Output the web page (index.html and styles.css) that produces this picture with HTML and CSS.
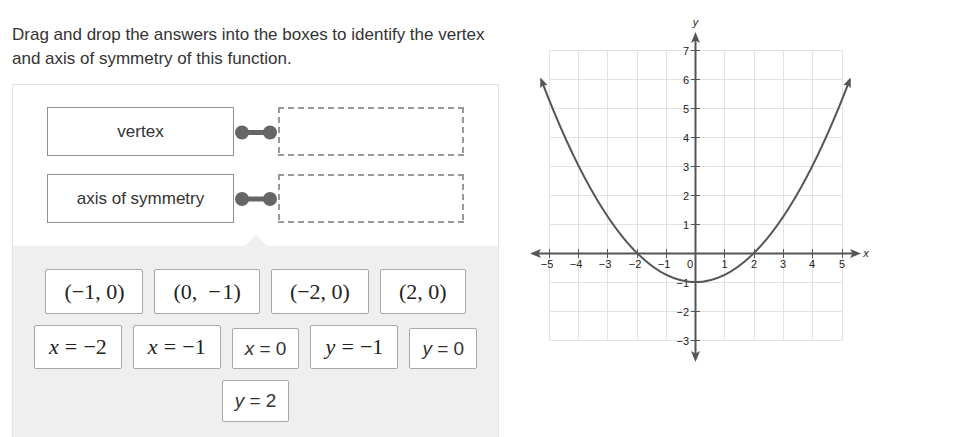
FILE: index.html
```html
<!DOCTYPE html>
<html>
<head>
<meta charset="utf-8">
<link rel="stylesheet" href="styles.css">
</head>
<body>
<div class="page">
  <div class="left">
    <p class="intro">Drag and drop the answers into the boxes to identify the vertex and axis of symmetry of this function.</p>
    <div class="panel">
      <div class="match">
        <div class="row">
          <div class="label">vertex</div>
          <svg class="connector" width="44" height="49" viewBox="0 0 44 49"><line x1="8" y1="25.5" x2="36" y2="25.5"/><circle cx="8" cy="25.5" r="7"/><circle cx="36" cy="25.5" r="7"/></svg>
          <div class="drop"></div>
        </div>
        <div class="row">
          <div class="label">axis of symmetry</div>
          <svg class="connector" width="44" height="49" viewBox="0 0 44 49"><line x1="8" y1="25" x2="36" y2="25"/><circle cx="8" cy="25" r="7"/><circle cx="36" cy="25" r="7"/></svg>
          <div class="drop"></div>
        </div>
      </div>
      <div class="bank">
        <div class="tile mj m1">(−1, 0)</div>
        <div class="tile mj m1">(0,&nbsp; −&#8202;1)</div>
        <div class="tile mj m1">(−2, 0)</div>
        <div class="tile mj m1">(2, 0)</div>
        <div class="tile mj m2"><i>x</i><span class="op">=</span>−2</div>
        <div class="tile mj m2"><i>x</i><span class="op">=</span>−1</div>
        <div class="tile s"><i>x</i> = 0</div>
        <div class="tile mj m2"><i>y</i><span class="op">=</span>−1</div>
        <div class="tile s"><i>y</i> = 0</div>
        <div class="tile s s3"><i>y</i> = 2</div>
      </div>
    </div>
  </div>
  <svg class="graph" width="360" height="437" viewBox="520 0 360 437">
    <defs>
      <marker id="ah" markerUnits="userSpaceOnUse" markerWidth="10" markerHeight="10" viewBox="0 0 10 10" refX="8" refY="5" orient="auto-start-reverse">
        <path d="M0,1 L10,5 L0,9 L2,5 z" fill="#555"/>
      </marker>
    </defs>
    <g class="grid">
      <line x1="549.5" y1="50" x2="549.5" y2="341"/>
      <line x1="578.5" y1="50" x2="578.5" y2="341"/>
      <line x1="607.5" y1="50" x2="607.5" y2="341"/>
      <line x1="637.5" y1="50" x2="637.5" y2="341"/>
      <line x1="666.5" y1="50" x2="666.5" y2="341"/>
      <line x1="724.5" y1="50" x2="724.5" y2="341"/>
      <line x1="754.5" y1="50" x2="754.5" y2="341"/>
      <line x1="783.5" y1="50" x2="783.5" y2="341"/>
      <line x1="812.5" y1="50" x2="812.5" y2="341"/>
      <line x1="842.5" y1="50" x2="842.5" y2="341"/>
      <line x1="549" y1="50.5" x2="843" y2="50.5"/>
      <line x1="549" y1="79.5" x2="843" y2="79.5"/>
      <line x1="549" y1="108.5" x2="843" y2="108.5"/>
      <line x1="549" y1="137.5" x2="843" y2="137.5"/>
      <line x1="549" y1="166.5" x2="843" y2="166.5"/>
      <line x1="549" y1="195.5" x2="843" y2="195.5"/>
      <line x1="549" y1="224.5" x2="843" y2="224.5"/>
      <line x1="549" y1="282.5" x2="843" y2="282.5"/>
      <line x1="549" y1="311.5" x2="843" y2="311.5"/>
      <line x1="549" y1="340.5" x2="843" y2="340.5"/>
    </g>
    <g class="axis">
      <line x1="534" y1="253.5" x2="856" y2="253.5"/>
      <line x1="695.5" y1="37" x2="695.5" y2="357"/>
    </g>
    <g class="heads">
      <path d="M530,253.5 L541,249 L538.5,253.5 L541,258 z"/>
      <path d="M861,253.5 L850,249 L852.5,253.5 L850,258 z"/>
      <path d="M695.5,32 L691,43 L695.5,40.5 L700,43 z"/>
      <path d="M695.5,362 L691,351 L695.5,353.5 L700,351 z"/>
    </g>
    <g class="ticks">
      <line x1="549.5" y1="249" x2="549.5" y2="258"/>
      <line x1="578.5" y1="249" x2="578.5" y2="258"/>
      <line x1="607.5" y1="249" x2="607.5" y2="258"/>
      <line x1="637.5" y1="249" x2="637.5" y2="258"/>
      <line x1="666.5" y1="249" x2="666.5" y2="258"/>
      <line x1="724.5" y1="249" x2="724.5" y2="258"/>
      <line x1="754.5" y1="249" x2="754.5" y2="258"/>
      <line x1="783.5" y1="249" x2="783.5" y2="258"/>
      <line x1="812.5" y1="249" x2="812.5" y2="258"/>
      <line x1="842.5" y1="249" x2="842.5" y2="258"/>
      <line x1="691" y1="50.5" x2="700" y2="50.5"/>
      <line x1="691" y1="79.5" x2="700" y2="79.5"/>
      <line x1="691" y1="108.5" x2="700" y2="108.5"/>
      <line x1="691" y1="137.5" x2="700" y2="137.5"/>
      <line x1="691" y1="166.5" x2="700" y2="166.5"/>
      <line x1="691" y1="195.5" x2="700" y2="195.5"/>
      <line x1="691" y1="224.5" x2="700" y2="224.5"/>
      <line x1="691" y1="282.5" x2="700" y2="282.5"/>
      <line x1="691" y1="311.5" x2="700" y2="311.5"/>
      <line x1="691" y1="340.5" x2="700" y2="340.5"/>
    </g>
    <g class="lbl xl">
      <text x="547" y="268">−5</text>
      <text x="576" y="268">−4</text>
      <text x="605" y="268">−3</text>
      <text x="635" y="268">−2</text>
      <text x="664" y="268">−1</text>
      <text x="690" y="268">0</text>
      <text x="724.5" y="268">1</text>
      <text x="754" y="268">2</text>
      <text x="783" y="268">3</text>
      <text x="812" y="268">4</text>
      <text x="842" y="268">5</text>
    </g>
    <g class="lbl yl">
      <text x="689" y="54.5">7</text>
      <text x="689" y="83.5">6</text>
      <text x="689" y="112.5">5</text>
      <text x="689" y="141.5">4</text>
      <text x="689" y="170.5">3</text>
      <text x="689" y="199.5">2</text>
      <text x="689" y="228.5">1</text>
      <text x="689" y="286.5">−1</text>
      <text x="689" y="315.5">−2</text>
      <text x="689" y="344.5">−3</text>
    </g>
    <text class="lbl axn" x="695.5" y="26">y</text>
    <text class="lbl axn" x="866" y="257">x</text>
    <path class="curve" d="M541.1 79.3 Q695.5 484.9 849.9 79.3" marker-start="url(#ah)" marker-end="url(#ah)"/>
  </svg>
</div>
</body>
</html>
```

FILE: styles.css
```css
html, body {
  margin: 0;
  padding: 0;
  overflow: hidden;
  background: #fff;
}
.page {
  display: flex;
  align-items: flex-start;
  width: 957px;
  height: 437px;
  overflow: hidden;
}
.left {
  width: 487px;
  padding: 23px 0 0 12px;
  flex: none;
}
.intro {
  margin: 0 0 13px;
  font: 17px/24px "Liberation Sans", Arial, sans-serif;
  color: #333;
}
.panel {
  border: 1px solid #e4e4e4;
  border-bottom: none;
}
.match {
  background: #fff;
  padding: 22px 34px 23px;
  display: flex;
  flex-direction: column;
  gap: 18px;
}
.row {
  display: flex;
  align-items: center;
}
.label {
  box-sizing: border-box;
  width: 187px;
  height: 49px;
  border: 1px solid #8f8f8f;
  display: flex;
  align-items: center;
  justify-content: center;
  font: 17px "Liberation Sans", Arial, sans-serif;
  color: #333;
}
.connector {
  display: block;
  flex: none;
}
.connector line {
  stroke: #666;
  stroke-width: 5;
}
.connector circle {
  fill: #666;
}
.drop {
  box-sizing: border-box;
  width: 186px;
  height: 49px;
  background:
    repeating-linear-gradient(90deg, #999 0 6px, transparent 6px 10px) left top / 100% 2px no-repeat,
    repeating-linear-gradient(90deg, #999 0 6px, transparent 6px 10px) left bottom / 100% 2px no-repeat,
    repeating-linear-gradient(180deg, #999 0 6px, transparent 6px 10px) left top / 2px 100% no-repeat,
    repeating-linear-gradient(180deg, #999 0 6px, transparent 6px 10px) right top / 2px 100% no-repeat;
}
.bank {
  position: relative;
  background: #efefef;
  padding: 23px 12px 15px;
  display: flex;
  flex-wrap: wrap;
  justify-content: center;
  align-items: flex-end;
  gap: 11px 11px;
}
.bank::before {
  content: "";
  position: absolute;
  top: -11px;
  left: 232px;
  border-left: 11px solid transparent;
  border-right: 11px solid transparent;
  border-bottom: 11px solid #efefef;
}
.tile {
  box-sizing: border-box;
  background: #fff;
  border: 1px solid #a8a8a8;
  border-radius: 2px;
  color: #222;
  white-space: nowrap;
}
.mj {
  font-family: "Liberation Serif", "Times New Roman", serif;
  font-size: 22px;
}
.mj i, .s i {
  font-style: italic;
}
.op {
  margin: 0 0.28em;
}
.m1 {
  padding: 0 18px;
  height: 45px;
  line-height: 43px;
}
.m2 {
  padding: 0 14px;
  height: 44px;
  line-height: 42px;
}
.s {
  padding: 0 12px;
  height: 41px;
  font: 19px/39px "Liberation Sans", Arial, sans-serif;
  color: #333;
}
.s3 {
  height: 42px;
  line-height: 40px;
}
.graph {
  display: block;
  flex: none;
  margin-left: 21px;
}
.grid line {
  stroke: #e2e2e2;
  stroke-width: 1;
}
.axis line {
  stroke: #555;
  stroke-width: 2;
}
.heads path {
  fill: #555;
}
.ticks line {
  stroke: #555;
  stroke-width: 1;
}
.lbl {
  font-family: "Liberation Sans", Arial, sans-serif;
  font-size: 11px;
  fill: #222;
}
.xl text {
  text-anchor: middle;
}
.yl text {
  text-anchor: end;
}
.axn {
  font-style: italic;
  text-anchor: middle;
}
.curve {
  fill: none;
  stroke: #555;
  stroke-width: 2;
}
```
